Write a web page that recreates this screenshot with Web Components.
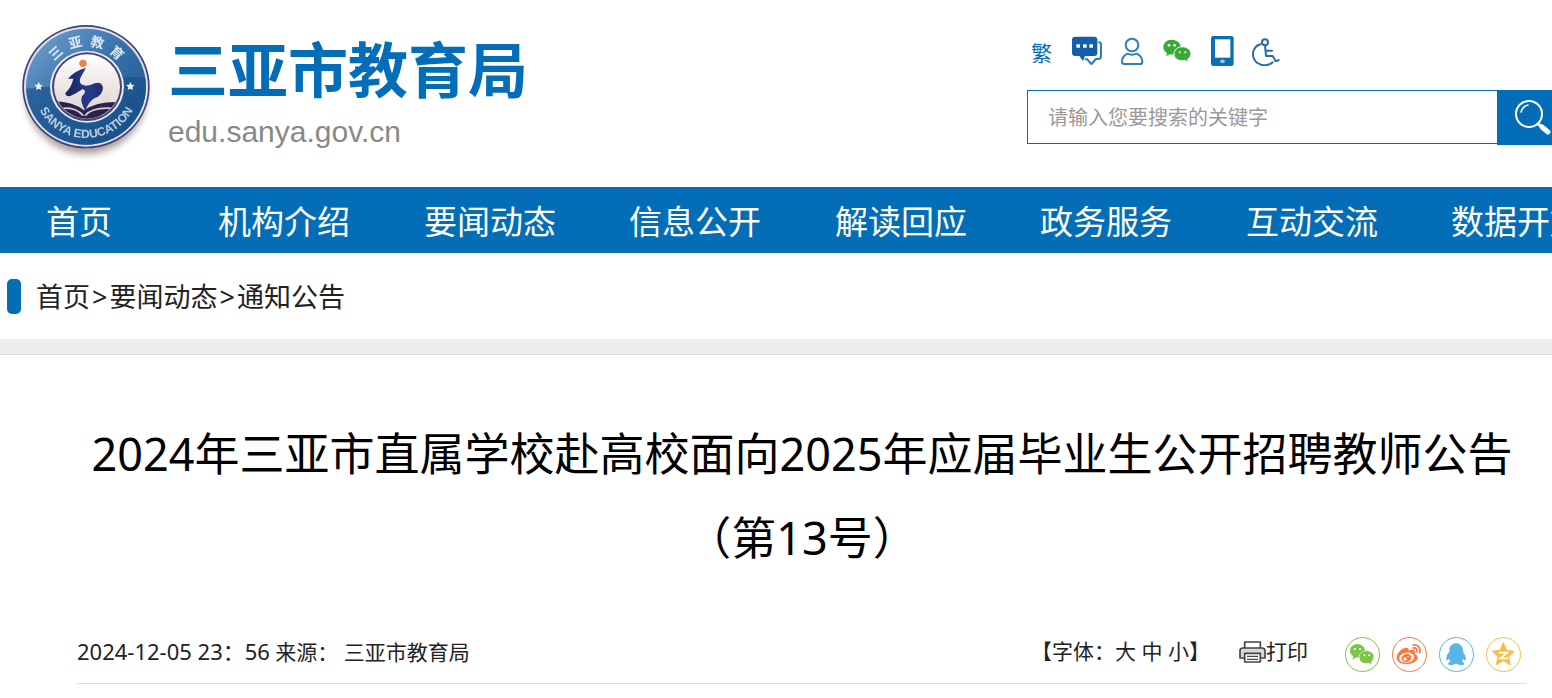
<!DOCTYPE html>
<html lang="zh-CN">
<head>
<meta charset="utf-8">
<meta name="viewport" content="width=device-width, initial-scale=1">
<title>三亚市教育局</title>
<style>
  html { --brand: #036eb7; --ink: #222; }
  body {
    margin: 0; background: #fff; color: var(--ink); overflow-x: hidden;
    font-family: "Noto Sans", "Noto Sans CJK SC", sans-serif;
    text-spacing-trim: space-all;
  }
  time { font-size: 22px; }
</style>
</head>
<body>
<site-header>
  <site-brand slot="brand" domain="edu.sanya.gov.cn">三亚市教育局</site-brand>
  <site-tools slot="tools"></site-tools>
  <site-search slot="tools" placeholder="请输入您要搜索的关键字"></site-search>
</site-header>
<site-nav>
  <a href="#home">首页</a><a href="#org">机构介绍</a><a href="#news">要闻动态</a><a href="#info">信息公开</a><a href="#reply">解读回应</a><a href="#service">政务服务</a><a href="#interact">互动交流</a><a href="#data">数据开放</a>
</site-nav>
<bread-crumb><a href="#home">首页</a><span>&gt;</span><a href="#news">要闻动态</a><span>&gt;</span><a href="#notice">通知公告</a></bread-crumb>
<news-article>
  <span slot="title">2024年三亚市直属学校赴高校面向2025年应届毕业生公开招聘教师公告（第13号）</span>
  <span slot="info"><time datetime="2024-12-05T23:56">2024-12-05 23：56</time> 来源： 三亚市教育局</span>
  <font-sizer slot="actions"></font-sizer>
  <print-button slot="actions">打印</print-button>
  <share-bar slot="actions"></share-bar>
</news-article>

<script>
const define = (name, html) => {
  const template = document.createElement('template');
  template.innerHTML = html;
  customElements.define(name, class extends HTMLElement {
    constructor() {
      super();
      this.attachShadow({ mode: 'open' }).append(template.content.cloneNode(true));
    }
    connectedCallback() {
      for (const el of this.shadowRoot.querySelectorAll('[data-text]'))
        el.textContent = this.getAttribute(el.dataset.text);
      for (const el of this.shadowRoot.querySelectorAll('input'))
        el.placeholder = this.getAttribute('placeholder') || '';
    }
  });
};

define('site-header', `
<style>
  :host { display: block; }
  header { display: flex; justify-content: space-between; min-height: 172px; padding: 15px 0 0 10px; }
  .tools { flex: 0 0 525px; padding-top: 21px; }
</style>
<header><slot name="brand"></slot><div class="tools"><slot name="tools"></slot></div></header>`);

define('site-brand', `
<style>
  :host { display: block; }
  a { display: flex; color: var(--brand); text-decoration: none; }
  svg { width: 158px; height: 150px; flex: none; }
  .names { padding-top: 19px; }
  .name { font-size: 60px; line-height: 72px; font-weight: 700; white-space: nowrap; }
  .domain { font: 30px/36px "Liberation Sans", sans-serif; color: #888; padding-top: 8px; }
</style>
<a href="#home">
  <svg viewBox="0 0 474 450" aria-hidden="true">
    <defs>
      <linearGradient id="ring" x1="0" y1="0" x2="1" y2="1">
        <stop offset="0" stop-color="#76a5d1"/><stop offset=".45" stop-color="#3973ad"/><stop offset="1" stop-color="#174f86"/>
      </linearGradient>
      <linearGradient id="disc" x1="0" y1="0" x2="0" y2="1">
        <stop offset="0" stop-color="#fff"/><stop offset=".5" stop-color="#ece6e5"/><stop offset="1" stop-color="#ddd2d2"/>
      </linearGradient>
      <linearGradient id="figure" x1="0" y1="0" x2="1" y2="0">
        <stop offset="0" stop-color="#1f2455"/><stop offset=".6" stop-color="#263a92"/><stop offset="1" stop-color="#252d68"/>
      </linearGradient>
      <filter id="soft" x="-20%" y="-20%" width="140%" height="140%"><feGaussianBlur stdDeviation="11"/></filter>
      <clipPath id="inner"><ellipse cx="231" cy="215" rx="97" ry="96"/></clipPath>
      <clipPath id="outer"><ellipse cx="228" cy="215" rx="180" ry="174"/></clipPath>
      <path id="top" d="M107 215A122 122 0 0 1 351 215"/>
      <path id="bottom" d="M72 215A157 154 0 0 0 386 215"/>
    </defs>
    <ellipse cx="228" cy="239" rx="182" ry="178" fill="#806b67" opacity=".65" filter="url(#soft)"/>
    <ellipse cx="228" cy="215" rx="191" ry="185" fill="#3f4276"/>
    <ellipse cx="228" cy="215" rx="186" ry="180" fill="#e2dfe9"/>
    <ellipse cx="228" cy="215" rx="180" ry="174" fill="url(#ring)"/>
    <path d="M40 222Q140 215 228 198Q320 183 420 187V400H40Z" fill="#164e88" opacity=".6" clip-path="url(#outer)"/>
    <ellipse cx="231" cy="215" rx="111" ry="108" fill="#edeaf0"/>
    <ellipse cx="231" cy="215" rx="105" ry="103" fill="#464375"/>
    <ellipse cx="231" cy="215" rx="99" ry="97" fill="url(#disc)"/>
    <g clip-path="url(#inner)">
      <path d="M125 258Q190 260 222 286Q265 256 340 262V330H125Z" fill="#29224b"/>
      <path d="M160 280Q196 276 220 302M225 302Q247 276 306 280" fill="none" stroke="#d8ced5" stroke-width="5"/>
    </g>
    <path d="M228 159Q196 166 174 191L190 191Q184 218 166 234Q168 246 181 243Q203 233 218 222Q233 228 216 244Q209 259 226 288Q236 260 253 250Q278 241 279 218Q275 199 254 205Q229 218 214 208Q205 199 214 183Z" fill="url(#figure)"/>
    <circle cx="219" cy="145" r="11" fill="#e6844b"/>
    <g fill="#f0f5fb">
      <path id="star" d="m86 201 4 8 9 1-7 6 2 9-8-4-8 4 2-9-7-6 9-1Z"/>
      <use href="#star" x="275"/>
      <text font-family="Noto Sans CJK SC, sans-serif" font-weight="700" font-size="40" opacity=".9" text-anchor="middle"><textPath href="#top" startOffset="50%">三&#8194;亚&#8194;教&#8194;育</textPath></text>
      <text font-family="Liberation Sans, sans-serif" font-weight="700" font-size="36" opacity=".75" text-anchor="middle"><textPath href="#bottom" startOffset="50%">SANYA EDUCATION</textPath></text>
    </g>
  </svg>
  <div class="names"><div class="name"><slot></slot></div><div class="domain" data-text="domain"></div></div>
</a>`);

define('site-tools', `
<style>
  :host { display: block; }
  div { display: flex; gap: 15px; align-items: center; height: 30px; padding-left: 4px; }
  a { display: block; width: 30px; height: 30px; color: var(--brand); text-decoration: none; }
  .trad { width: 26px; font-size: 21px; line-height: 34px; height: 30px; }
  svg { display: block; width: 30px; height: 30px; fill: none; stroke-linecap: round; stroke-linejoin: round; }
</style>
<div>
  <a class="trad" href="#trad">繁</a>
  <a href="#chat" aria-label="咨询"><svg viewBox="0 0 90 90">
    <path d="M81 19Q87 19 87 27V60Q87 69 78 69H72L58 84L46 70H41" stroke="#3279b8" stroke-width="6"/>
    <path d="M10 2H67Q76 2 76 11V51Q76 60 67 60H39L33 75L22 60H10Q0 60 0 51V11Q0 2 10 2Z" fill="#135fa5"/>
    <g fill="#fff"><rect x="13" y="25" width="11" height="10"/><rect x="33" y="25" width="11" height="10"/><rect x="52" y="25" width="11" height="10"/></g></svg></a>
  <a href="#user" aria-label="个人中心"><svg viewBox="0 0 90 90"><g stroke="#2a7fbd" stroke-width="6">
    <circle cx="45" cy="27" r="19"/><path d="M31 53Q15 61 15 78Q15 84 22 84H69Q76 84 76 77Q75 60 59 53Q45 59 31 53Z"/></g></svg></a>
  <a href="#wechat" aria-label="微信"><svg viewBox="0 0 90 90"><g fill="#37ab37">
    <path d="M29 11C14 11 4 21 4 33Q4 45 15 51L12 61L24 55Q55 60 56 33C56 20 43 11 29 11Z"/>
    <path stroke="#fff" stroke-width="3" d="M61 32C46 32 36 42 36 54C36 69 52 77 68 73L79 78L77 70Q87 64 87 54C87 41 75 32 61 32Z"/></g>
    <g fill="#fff"><circle cx="21" cy="28" r="4"/><circle cx="38" cy="28" r="4"/><circle cx="53" cy="49" r="3"/><circle cx="70" cy="49" r="3"/></g></svg></a>
  <a href="#mobile" aria-label="手机版"><svg viewBox="0 0 90 90"><rect x="12" y="0" width="68" height="90" rx="7" fill="#0c6fb5"/>
    <rect x="24" y="10" width="46" height="55" fill="#fff"/><rect x="40" y="71" width="13" height="10" rx="3" fill="#9cc7e5"/></svg></a>
  <a href="#access" aria-label="无障碍"><svg viewBox="0 0 90 90"><g stroke="#296cad" stroke-width="6">
    <circle cx="39" cy="19" r="9"/><path d="M39 29L42 60H62L71 76L80 72M42 44H60M25 25C7 30 0 48 4 63C10 86 42 96 62 79" /></g></svg></a>
</div>`);

define('site-search', `
<style>
  :host { display: block; margin-top: 24px; }
  form { display: flex; margin: 0; }
  input { box-sizing: border-box; flex: 1; min-width: 0; height: 54px; padding: 0 20px; border: 1px solid var(--brand); border-right: 0; border-radius: 0; background: #fff; font: inherit; font-size: 20px; color: #333; outline: 0; }
  input::placeholder { color: #999; opacity: 1; }
  button { flex: 0 0 55px; height: 55px; padding: 0; border: 0; background: var(--brand); cursor: pointer; }
  svg { display: block; width: 55px; height: 55px; fill: none; stroke: #fff; stroke-linecap: round; }
</style>
<form role="search">
  <input type="search" aria-label="搜索关键字">
  <button type="button" aria-label="搜索"><svg viewBox="0 0 55 55">
    <circle cx="32" cy="24" r="13" stroke-width="2"/><path d="M24 22Q26 16 31 15" stroke-width="1.5"/>
    <path d="M41 34L44 36" stroke-width="3"/><path d="M45 37L51 42" stroke-width="5"/></svg></button>
</form>`);

define('site-nav', `
<style>
  :host { display: block; background: var(--brand); }
  nav { display: flex; height: 66px; overflow: hidden; }
  ::slotted(a) { flex: none; padding: 0 37px 0 36px; color: #fff; font-size: 33px; line-height: 70px; text-decoration: none; white-space: nowrap; }
  ::slotted(a:nth-child(odd)) { padding: 0 37px; }
  ::slotted(a:first-child) { padding: 0 70px 0 46px; }
</style>
<nav aria-label="主导航"><slot></slot></nav>`);

define('bread-crumb', `
<style>
  :host { display: block; border-bottom: 1px solid #ddd; }
  nav { display: flex; align-items: center; height: 86px; padding-left: 7px; font-size: 27px; line-height: 36px; }
  nav::before { content: ""; width: 14px; height: 35px; margin-right: 15px; border-radius: 5px; background: var(--brand); }
  .band { height: 15px; background: #eee; }
  ::slotted(a) { padding-top: 2px; color: inherit; text-decoration: none; }
  ::slotted(span) { padding: 2px 2px 0; }
</style>
<nav aria-label="当前位置"><slot></slot></nav><div class="band"></div>`);

define('news-article', `
<style>
  :host { display: block; }
  article { padding: 57px 25px 14px 77px; }
  h1 { margin: 0; font-size: 45px; line-height: 84px; font-weight: 400; color: #000; text-align: center; }
  .meta { display: flex; justify-content: space-between; padding: 57px 6px 11px 0; border-bottom: 1px solid #ddd; font-size: 21px; line-height: 28px; white-space: nowrap; }
  .actions { display: flex; }
</style>
<article><h1><slot name="title"></slot></h1>
<div class="meta"><slot name="info"></slot><div class="actions"><slot name="actions"></slot></div></div></article>`);

define('font-sizer', `
<style>
  :host { display: block; margin-right: 29px; }
  button { padding: 0; border: 0; background: none; color: inherit; font: inherit; line-height: 28px; cursor: pointer; }
</style>
<span>【字体：<button type="button">大</button> <button type="button">中</button> <button type="button">小</button>】</span>`);

define('print-button', `
<style>
  :host { display: block; margin-right: 37px; }
  button { display: flex; padding: 0; border: 0; background: none; color: inherit; font: inherit; line-height: 28px; cursor: pointer; }
  svg { width: 27px; height: 22px; margin-top: 4px; }
</style>
<button type="button"><svg viewBox="0 0 81 66" fill="#fff" stroke="#444" stroke-width="5" stroke-linejoin="round" aria-hidden="true">
  <path d="M17 21V3H64V21"/><path d="M16 51H3V29Q3 21 12 21H69Q78 21 78 29V51H64Z" fill="#d8d8d8"/>
  <rect x="17" y="37" width="47" height="26"/><path d="M24 46H57M24 55H57" stroke-width="4"/></svg><slot></slot></button>`);

define('share-bar', `
<style>
  :host { display: flex; gap: 12px; }
  button { box-sizing: border-box; width: 35px; height: 35px; padding: 0; border: 1px solid; border-radius: 50%; background: #fff; cursor: pointer; }
  svg { display: block; width: 33px; height: 33px; fill: currentColor; }
  .wechat { color: #7bc549; } .weibo { color: #ff763b; } .qq { color: #56b6e7; } .qzone { color: #fdbe3d; }
</style>
<button class="wechat" type="button" aria-label="分享到微信"><svg viewBox="0 0 99 99">
  <path d="M34 18C21 18 12 27 12 39Q12 49 22 55L19 65L31 58Q57 60 57 39C57 27 46 18 34 18Z"/>
  <path stroke="#fff" stroke-width="2" d="M62 38C49 38 39 47 39 58C39 72 54 80 68 76L78 80L76 72Q84 66 84 57C84 46 74 38 62 38Z"/>
  <g fill="#fff"><circle cx="27" cy="33" r="3"/><circle cx="42" cy="33" r="3"/><circle cx="55" cy="52" r="3"/><circle cx="69" cy="52" r="3"/></g></svg></button>
<button class="weibo" type="button" aria-label="分享到微博"><svg viewBox="0 0 99 99">
  <path d="M38 29C24 31 10 48 11 61C12 74 28 80 45 78C62 77 76 67 74 57Q73 51 66 49Q70 37 60 35Q53 35 47 38Q49 28 38 29Z"/>
  <ellipse cx="41" cy="59" rx="23" ry="15" fill="#fff" transform="rotate(-8 41 59)"/><ellipse cx="40" cy="60" rx="15" ry="12" transform="rotate(-20 40 60)"/>
  <circle cx="36" cy="63" r="5" fill="#fff"/><circle cx="45" cy="56" r="2" fill="#fff"/>
  <path d="M60 21Q82 18 81 44M60 30Q73 28 72 42" fill="none" stroke="currentColor" stroke-width="5" stroke-linecap="round"/></svg></button>
<button class="qq" type="button" aria-label="分享到QQ"><svg viewBox="0 0 99 99">
  <path d="M48 16C34 16 27 27 28 41Q18 52 19 65Q20 70 27 63L31 70Q22 76 26 80Q36 83 48 77Q61 83 71 80Q75 76 66 70L70 63Q77 70 78 65Q78 52 69 41C70 27 62 16 48 16Z"/></svg></button>
<button class="qzone" type="button" aria-label="分享到QQ空间"><svg viewBox="0 0 99 99">
  <path d="M49 14L59 37L82 40L65 56L70 80L49 68L28 80L33 56L16 40L39 37Z" stroke="currentColor" stroke-width="3" stroke-linejoin="round"/>
  <path d="M35 44H61L39 61H64" fill="none" stroke="#fff" stroke-width="5"/></svg></button>`);
</script>
</body>
</html>
